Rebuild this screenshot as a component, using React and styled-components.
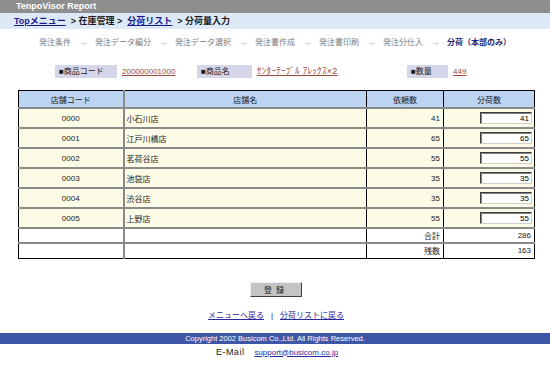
import React from "react";
import styled, { createGlobalStyle } from "styled-components";

const GlobalStyle = createGlobalStyle`
  html, body { margin: 0; padding: 0; background: #ffffff; }
  body {
    font-family: "Liberation Sans", "Noto Sans CJK JP", sans-serif;
    color: #1a1a1a;
    font-size: 8px;
  }
`;

const Page = styled.div`
  width: 550px;
  display: flex;
  flex-direction: column;
`;

const TitleBar = styled.div`
  height: 13px;
  line-height: 13px;
  background: #8e8e8e;
  color: #ffffff;
  font-weight: bold;
  font-size: 9px;
  padding-left: 16px;
`;

const Breadcrumb = styled.div`
  height: 16px;
  line-height: 16px;
  background: #dde9f6;
  padding-left: 14px;
  font-weight: bold;
  font-size: 9px;
  display: flex;
  gap: 5px;
  color: #1a1a1a;
`;

const CrumbLink = styled.a`
  color: #1a1a8c;
  text-decoration: underline;
`;

const Steps = styled.div`
  margin-top: 6px;
  height: 16px;
  line-height: 16px;
  display: flex;
  justify-content: center;
  gap: 8px;
  font-size: 8px;
  color: #7c7c7c;
`;

const Step = styled.span`
  color: ${(p) => (p.$current ? "#1c2870" : "#7c7c7c")};
  font-weight: ${(p) => (p.$current ? "bold" : "normal")};
`;

const InfoRow = styled.div`
  margin-top: 14px;
  padding-left: 55px;
  display: flex;
  height: 13px;
`;

const InfoLabel = styled.div`
  width: ${(p) => p.$w}px;
  box-sizing: border-box;
  background: #d6d6ea;
  padding-left: 4px;
  line-height: 13px;
  font-size: 8px;
  color: #1a1a1a;
`;

const InfoValue = styled.a`
  width: ${(p) => p.$w}px;
  box-sizing: border-box;
  padding-left: 5px;
  line-height: 13px;
  font-size: ${(p) => p.$size || 8}px;
  letter-spacing: ${(p) => (p.$size ? "0.3px" : "0")};
  color: #9a4a3c;
  text-decoration: underline;
  white-space: nowrap;
`;

const Table = styled.table`
  margin: 12px 0 0 18px;
  width: 516px;
  border-collapse: collapse;
  border: 1px solid #000;
  table-layout: fixed;
  font-size: 8px;
`;

const Th = styled.th`
  height: 16px;
  padding: 0;
  background: #bcd3f2;
  font-weight: normal;
  text-align: center;
  border-bottom: 1px solid #000;
  border-left: ${(p) => (p.$gray ? "2px solid #8a8a8a" : "1px solid #000")};
`;

const Tr = styled.tr`
  background: ${(p) => (p.$plain ? "#ffffff" : "#fbfbe8")};
  height: ${(p) => p.$h}px;
`;

const Td = styled.td`
  padding: 0 ${(p) => (p.$align === "right" ? "3px" : "2px")};
  text-align: ${(p) => p.$align || "left"};
  border-top: 2px solid #8a8a8a;
  border-left: ${(p) => (p.$gray ? "2px solid #8a8a8a" : "1px solid #000")};
  white-space: nowrap;
`;

const InputCell = styled.td`
  padding: 0 2px 0 0;
  text-align: right;
  border-top: 2px solid #8a8a8a;
  border-left: 1px solid #000;
`;

const NumInput = styled.input`
  width: 52px;
  height: 12px;
  box-sizing: border-box;
  border-style: solid;
  border-width: 1px;
  border-color: #404040 #d4d0c8 #d4d0c8 #404040;
  box-shadow: inset 1px 1px 0 #808080;
  background: #ffffff;
  font-family: "Liberation Sans", "Noto Sans CJK JP", sans-serif;
  font-size: 8px;
  text-align: right;
  padding: 0 2px;
  margin: 0;
  vertical-align: middle;
  outline: none;
`;

const ButtonRow = styled.div`
  margin-top: 23px;
  display: flex;
  justify-content: center;
`;

const Button = styled.button`
  margin-left: 2px;
  width: 52px;
  height: 15px;
  padding: 0;
  background: #c4c4c4;
  border-style: solid;
  border-width: 1px;
  border-color: #f0f0f0 #404040 #404040 #f0f0f0;
  font-family: "Noto Sans CJK JP", sans-serif;
  font-size: 8px;
  color: #1a1a1a;
  letter-spacing: 4px;
`;

const Links = styled.div`
  margin-top: 14px;
  height: 10px;
  line-height: 10px;
  display: flex;
  justify-content: center;
  gap: 7px;
  font-size: 8px;
  padding-left: 2px;
`;

const NavLink = styled.a`
  color: #2a2aa0;
  text-decoration: underline;
`;

const Footer = styled.div`
  margin-top: 12px;
  height: 11px;
  line-height: 11px;
  background: #3d57a6;
  color: #ffffff;
  text-align: center;
  font-size: 7.5px;
`;

const Email = styled.div`
  margin-top: 3px;
  line-height: 11px;
  display: flex;
  justify-content: center;
  align-items: baseline;
  gap: 10px;
  font-size: 8px;
  padding-left: 4px;
`;

const EmailLabel = styled.span`
  font-size: 9px;
  letter-spacing: 0.5px;
`;

const steps = [
  "発注条件",
  "発注データ編分",
  "発注データ選択",
  "発注書作成",
  "発注書印刷",
  "発注分仕入",
];

const rows = [
  ["0000", "小石川店", 41],
  ["0001", "江戸川橋店", 65],
  ["0002", "茗荷谷店", 55],
  ["0003", "池袋店", 35],
  ["0004", "渋谷店", 35],
  ["0005", "上野店", 55],
];

export default function App() {
  return (
    <Page>
      <GlobalStyle />
      <TitleBar>TenpoVisor Report</TitleBar>
      <Breadcrumb>
        <CrumbLink>Topメニュー</CrumbLink>
        <span>&gt; 在庫管理 &gt;</span>
        <CrumbLink>分荷リスト</CrumbLink>
        <span>&gt; 分荷量入力</span>
      </Breadcrumb>
      <Steps>
        {steps.map((s) => (
          <React.Fragment key={s}>
            <Step>{s}</Step>
            <span>→</span>
          </React.Fragment>
        ))}
        <Step $current>分荷（本部のみ）</Step>
      </Steps>
      <InfoRow>
        <InfoLabel $w={62}>■商品コード</InfoLabel>
        <InfoValue $w={80}>200000001000</InfoValue>
        <InfoLabel $w={55}>■商品名</InfoLabel>
        <InfoValue $w={155} $size={9}>ｾﾝﾀｰﾃｰﾌﾞﾙ ｱﾚｯｸｽ×2</InfoValue>
        <InfoLabel $w={41}>■数量</InfoLabel>
        <InfoValue $w={60}>449</InfoValue>
      </InfoRow>
      <Table>
        <colgroup>
          <col style={{ width: 105 }} />
          <col style={{ width: 243 }} />
          <col style={{ width: 77 }} />
          <col style={{ width: 91 }} />
        </colgroup>
        <thead>
          <tr>
            <Th>店舗コード</Th>
            <Th $gray>店舗名</Th>
            <Th>依頼数</Th>
            <Th>分荷数</Th>
          </tr>
        </thead>
        <tbody>
          {rows.map(([code, name, qty]) => (
            <Tr key={code} $h={20}>
              <Td $align="center">{code}</Td>
              <Td $gray>{name}</Td>
              <Td $align="right">{qty}</Td>
              <InputCell>
                <NumInput defaultValue={qty} readOnly />
              </InputCell>
            </Tr>
          ))}
          <Tr $plain $h={15}>
            <Td />
            <Td $gray />
            <Td $align="right">合計</Td>
            <Td $align="right">286</Td>
          </Tr>
          <Tr $plain $h={15}>
            <Td />
            <Td $gray />
            <Td $align="right">残数</Td>
            <Td $align="right">163</Td>
          </Tr>
        </tbody>
      </Table>
      <ButtonRow>
        <Button>登録</Button>
      </ButtonRow>
      <Links>
        <NavLink>メニューへ戻る</NavLink>
        <span>|</span>
        <NavLink>分荷リストに戻る</NavLink>
      </Links>
      <Footer>Copyright 2002 Busicom Co.,Ltd. All Rights Reserved.</Footer>
      <Email>
        <EmailLabel>E-Mail</EmailLabel>
        <NavLink>support@busicom.co.jp</NavLink>
      </Email>
    </Page>
  );
}
